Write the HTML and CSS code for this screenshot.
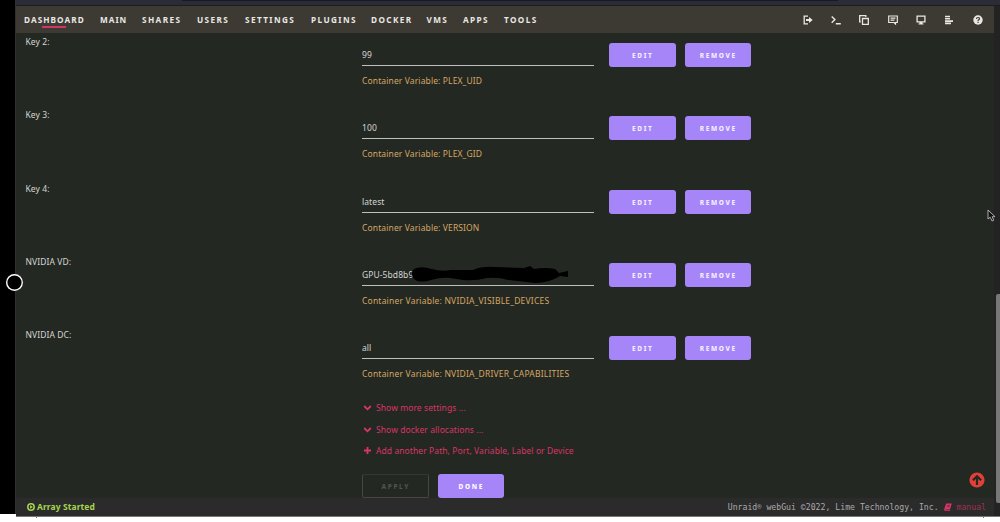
FILE: index.html
```html
<!DOCTYPE html>
<html lang="en">
<head>
<meta charset="utf-8">
<title>Unraid Docker</title>
<link rel="stylesheet" href="styles.css">
</head>
<body>
<div class="screen">
  <div class="side"></div>
  <div class="window">
    <div class="browser-bar"><div class="address"></div></div>
    <header class="header">
      <nav class="nav">
        <a class="active">DASHBOARD</a><a class="tight">MAIN</a><a>SHARES</a><a>USERS</a><a>SETTINGS</a><a>PLUGINS</a><a>DOCKER</a><a>VMS</a><a>APPS</a><a>TOOLS</a>
      </nav>
      <div class="tools">
        <svg viewBox="0 0 10 10"><path d="M5 1.200H1.200v7.600H5" fill="none" stroke="currentColor" stroke-width="1.300"/><path d="M3 3.900h3V1.900L9.700 5 6 8.100v-2H3z" fill="currentColor"/></svg>
        <svg viewBox="0 0 10 10"><path d="M.7 1.500 3.900 4.600.7 7.700M4.800 8.700h5" fill="none" stroke="currentColor" stroke-width="1.400"/></svg>
        <svg viewBox="0 0 10 10"><path d="M3.500 3.500h5.800v5.800H3.500zM1.800 6.800H.7V.7h6.100v1.200" fill="none" stroke="currentColor" stroke-width="1.300"/></svg>
        <svg viewBox="0 0 10 10"><path d="M.7 1h8.600v6.500H7.500V9L6 7.500H.7zM2.500 3.200h5M2.500 5.200h4" fill="none" stroke="currentColor" stroke-width="1.200"/></svg>
        <svg viewBox="0 0 10 10"><path d="M1.100 1.200h7.800v5.600H1.100z" fill="none" stroke="currentColor" stroke-width="1.300"/><path d="M3.500 7h3v1.500h1v1h-5v-1h1z" fill="currentColor"/></svg>
        <svg viewBox="0 0 10 10"><path d="M1 1.500h5M1 3.800h5M1 6.100h8M1 8.400h6" fill="none" stroke="currentColor" stroke-width="1.600"/></svg>
        <svg viewBox="0 0 10 10"><circle cx="5" cy="5" r="4.700" fill="currentColor"/><path d="M3.500 4C3.400 2 6.600 2 6.500 3.900 6.400 4.800 5 4.800 5 5.900M5 6.800v1.100" fill="none" stroke="#3c3a33" stroke-width="1.200"/></svg>
      </div>
    </header>
    <main class="content">
      <section class="row"><div class="label">Key 2:</div><div class="field"><div class="input">99</div><div class="desc">Container Variable: PLEX_UID</div></div><div class="actions"><button class="btn">EDIT</button><button class="btn">REMOVE</button></div></section>
      <section class="row"><div class="label">Key 3:</div><div class="field"><div class="input">100</div><div class="desc">Container Variable: PLEX_GID</div></div><div class="actions"><button class="btn">EDIT</button><button class="btn">REMOVE</button></div></section>
      <section class="row"><div class="label">Key 4:</div><div class="field"><div class="input">latest</div><div class="desc">Container Variable: VERSION</div></div><div class="actions"><button class="btn">EDIT</button><button class="btn">REMOVE</button></div></section>
      <section class="row"><div class="label">NVIDIA VD:</div><div class="field"><div class="input">GPU-5bd8b9</div><div class="desc wide">Container Variable: NVIDIA_VISIBLE_DEVICES</div>
        <svg class="scribble" viewBox="0 0 158 18"><path d="M1 4Q7-1 20 3 30 6 39 4H61Q70 0 83 1L112 2 118 0 122 3Q134 1 143 3L147 7 156 5V11L148 10Q137 17 123 17 106 15 96 14 87 11 75 12 64 15 51 14L38 12Q30 11 19 14 9 17 3 14-2 9 1 4Z"/></svg>
      </div><div class="actions"><button class="btn">EDIT</button><button class="btn">REMOVE</button></div></section>
      <section class="row"><div class="label">NVIDIA DC:</div><div class="field"><div class="input">all</div><div class="desc wide">Container Variable: NVIDIA_DRIVER_CAPABILITIES</div></div><div class="actions"><button class="btn">EDIT</button><button class="btn">REMOVE</button></div></section>
      <div class="links">
        <a><svg viewBox="0 0 9 9"><path d="M1.200 3 4.500 6.300 7.800 3"/></svg>Show more settings ...</a>
        <a><svg viewBox="0 0 9 9"><path d="M1.200 3 4.500 6.300 7.800 3"/></svg>Show docker allocations ...</a>
        <a><svg viewBox="0 0 9 9"><path d="M4.500 1v7M1 4.500h7"/></svg>Add another Path, Port, Variable, Label or Device</a>
      </div>
      <div class="submit"><button class="btn disabled">APPLY</button><button class="btn strong">DONE</button></div>
    </main>
    <footer class="footer">
      <div class="status"><svg viewBox="0 0 8 8"><circle cx="4" cy="4" r="3.200" fill="none" stroke="currentColor" stroke-width="1.500"/><path d="M3 2.200 6 4 3 5.800z" fill="currentColor"/></svg>Array Started</div>
      <div class="copyright">Unraid<span class="reg">®</span> webGui ©2022, Lime Technology, Inc. <svg viewBox="0 0 8 8"><path d="M2.200.5h5.500L6 6.500H1.500q-.5.500.2.700H6.500L6 8H1Q0 7.500.3 6z" fill="currentColor"/><path d="M3.200 2.300h2.800M2.900 3.700h2.800" stroke="#2b2b2b" stroke-width=".6"/></svg> <a>manual</a></div>
    </footer>
  </div>
</div>
<div class="ticks"><i></i><i></i></div>
<div class="scroll-thumb"></div>
<div class="handle"></div>
<svg class="to-top" viewBox="0 0 16 16"><circle cx="8" cy="8" r="7.600" fill="#df4037"/><path d="M8 13V4.500M3.900 8.300 8 4.200l4.100 4.100" fill="none" stroke="#242822" stroke-width="2.200"/></svg>
<svg class="cursor" viewBox="0 0 9 13"><path d="M1 1v9l2.200-1.800L5 12l1.700-.8-1.500-3.500H8z" fill="#111" stroke="#bbb" stroke-width=".9"/></svg>
</body>
</html>
```

FILE: styles.css
```css
* { box-sizing: border-box; }
body {
  margin: 0;
  width: 1000px;
  height: 522px;
  overflow: hidden;
  background: #fff;
  font-family: "Noto Sans", sans-serif;
  font-size: 8.500px;
  letter-spacing: .08px;
  color: #d4d5d2;
  position: relative;
}
.screen { display: flex; height: 517px; }
.side { width: 16px; height: 514px; background: #000; border-right: 1px solid #302f30; }
.window { width: 984px; background: #232323; border-bottom: 1px solid #777; display: flex; flex-direction: column; }
.browser-bar { height: 6px; background: #2b2c36; border-bottom: 1px solid #1b1b24; }
.address { width: 656px; height: 1px; margin-left: 166px; background: #191925; }
.header {
  width: 978px;
  height: 27px;
  background: #3c3a33;
  display: flex;
  align-items: center;
  justify-content: space-between;
  padding: 0 11.500px 0 8px;
  color: #e9e8e4;
}
.nav {
  display: grid;
  grid-template-columns: 76px 42px 55px 48px 66px 60px 55.500px 36.500px 41px 40px;
  font-size: 8.200px;
  font-weight: 700;
  letter-spacing: 1.400px;
  line-height: 16px;
}
.active { position: relative; letter-spacing: 1.080px; }
.tight { letter-spacing: 1px; }
.active::after { content: ""; position: absolute; left: 18px; bottom: 0; width: 24px; height: 2px; background: #cf3766; }
.tools { display: flex; gap: 18.300px; }
.tools svg { width: 10px; height: 10px; }
.content { width: 978px; height: 465px; background: #242822; overflow: hidden; }
.row { height: 73.250px; display: grid; grid-template-columns: 346px 232px 1fr; }
.label { padding-left: 9.500px; line-height: 18px; }
.field { position: relative; padding-top: 13px; }
.input { height: 20px; line-height: 18px; border-bottom: 1px solid #bec0bd; }
.desc { margin-top: 6px; line-height: 18px; color: #d5a762; letter-spacing: .120px; }
.wide { letter-spacing: .200px; }
.scribble { position: absolute; left: 50px; top: 13px; width: 158px; height: 18px; }
.actions { display: flex; gap: 9px; padding: 10px 0 0 15px; }
.btn {
  width: 66.500px;
  height: 24px;
  padding: 1px 0 0 1px;
  border: 0;
  border-radius: 3px;
  background: #a685f8;
  color: #f3edff;
  font: 800 6.500px "Noto Sans", sans-serif;
  letter-spacing: 1.600px;
}
.links { padding: 0 0 0 347px; color: #d93566; margin-top: -2.500px; }
.links a { display: flex; align-items: center; height: 21.500px; }
.links svg { width: 9px; height: 9px; margin-right: 4px; fill: none; stroke: currentColor; stroke-width: 1.800; }
.submit { display: flex; gap: 9px; padding: 12.500px 0 0 346px; }
.disabled { background: none; border: 1px solid #454842; border-top-color: #343832; color: #50534e; border-radius: 2px; }
.strong { color: #fff; }
.footer { width: 978px; height: 18px; background: #2b2b2b; display: flex; justify-content: space-between; align-items: center; padding: 0 8px 1px 11px; }
.status { display: flex; align-items: center; gap: 2px; color: #a5d54d; font-weight: 700; }
.status svg { width: 8px; height: 8px; }
.copyright { font: 8.180px "DejaVu Sans Mono", monospace; letter-spacing: 0; color: #aaa; white-space: pre; }
.copyright svg { width: 8px; height: 8px; color: #df3569; vertical-align: -1px; }
.copyright a { color: #9f3156; }
.reg { font-size: 7px; vertical-align: 1px; }
.ticks { display: flex; justify-content: space-between; padding: 0 16px 0 36px; }
.ticks i { width: 1px; height: 1px; background: #777; }
.scroll-thumb { position: absolute; left: 996px; top: 294px; width: 4px; height: 209px; background: #777; border-radius: 2px 0 0 2px; }
.handle { position: absolute; left: 6px; top: 274px; width: 17px; height: 17px; border-radius: 50%; background: #000; box-shadow: inset 0 0 0 1.400px #fff; }
.to-top { position: absolute; left: 969px; top: 472px; width: 16px; height: 16px; }
.cursor { position: absolute; left: 987px; top: 209px; width: 9px; height: 13px; }
```
